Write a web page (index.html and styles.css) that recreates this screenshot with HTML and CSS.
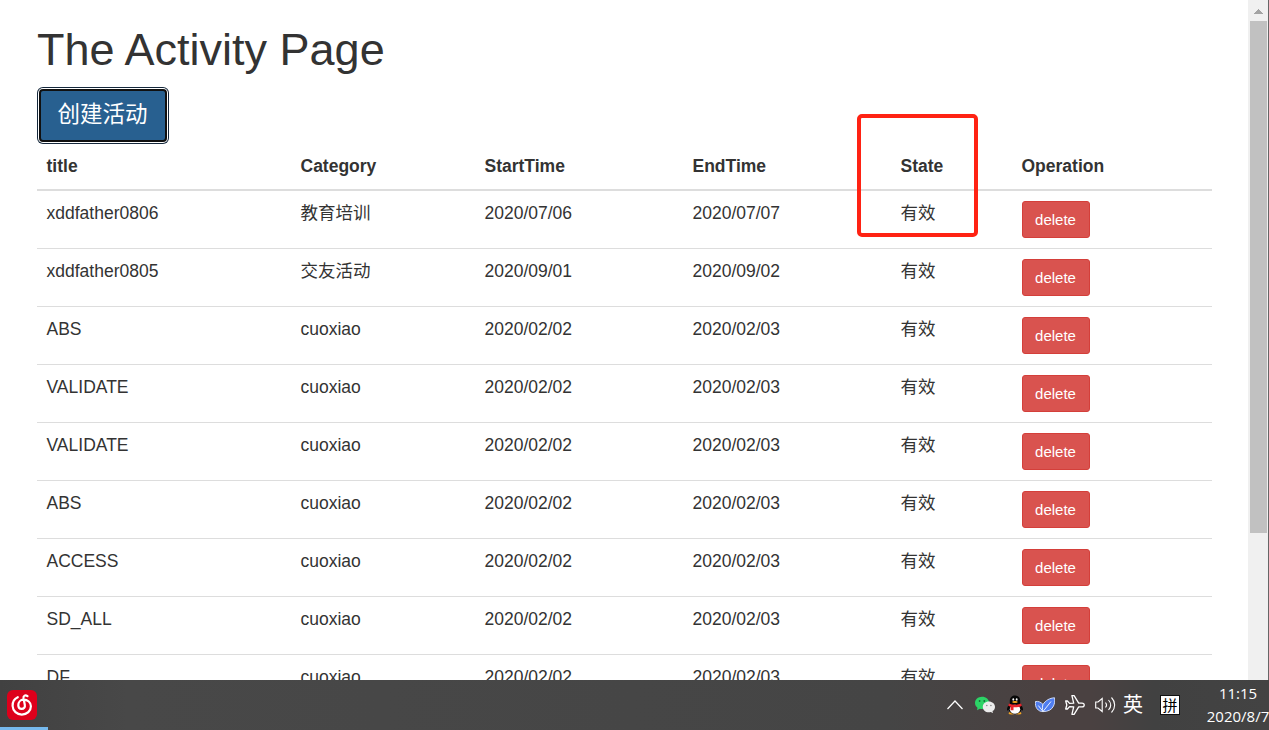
FILE: index.html
```html
<!DOCTYPE html>
<html lang="zh-CN">
<head>
    <meta charset="UTF-8">
    <meta name="viewport" content="width=device-width, initial-scale=1.0">
    <title>The Activity Page</title>
    <link rel="stylesheet" href="styles.css">
</head>
<body>
    <div class="window">
        <div class="container">
            <h1>The Activity Page</h1>
            <button class="btn btn-primary">创建活动</button>

            <table class="table">
                <colgroup>
                    <col class="col-title">
                    <col class="col-category">
                    <col class="col-time">
                    <col class="col-time">
                    <col class="col-state">
                    <col>
                </colgroup>
                <thead>
                    <tr>
                        <th>title</th>
                        <th>Category</th>
                        <th>StartTime</th>
                        <th>EndTime</th>
                        <th class="state-head">State<span class="highlight"></span></th>
                        <th>Operation</th>
                    </tr>
                </thead>
                <tbody>
                    <tr>
                        <td>xddfather0806</td>
                        <td>教育培训</td>
                        <td>2020/07/06</td>
                        <td>2020/07/07</td>
                        <td>有效</td>
                        <td><button class="btn btn-danger">delete</button></td>
                    </tr>
                    <tr>
                        <td>xddfather0805</td>
                        <td>交友活动</td>
                        <td>2020/09/01</td>
                        <td>2020/09/02</td>
                        <td>有效</td>
                        <td><button class="btn btn-danger">delete</button></td>
                    </tr>
                    <tr>
                        <td>ABS</td>
                        <td>cuoxiao</td>
                        <td>2020/02/02</td>
                        <td>2020/02/03</td>
                        <td>有效</td>
                        <td><button class="btn btn-danger">delete</button></td>
                    </tr>
                    <tr>
                        <td>VALIDATE</td>
                        <td>cuoxiao</td>
                        <td>2020/02/02</td>
                        <td>2020/02/03</td>
                        <td>有效</td>
                        <td><button class="btn btn-danger">delete</button></td>
                    </tr>
                    <tr>
                        <td>VALIDATE</td>
                        <td>cuoxiao</td>
                        <td>2020/02/02</td>
                        <td>2020/02/03</td>
                        <td>有效</td>
                        <td><button class="btn btn-danger">delete</button></td>
                    </tr>
                    <tr>
                        <td>ABS</td>
                        <td>cuoxiao</td>
                        <td>2020/02/02</td>
                        <td>2020/02/03</td>
                        <td>有效</td>
                        <td><button class="btn btn-danger">delete</button></td>
                    </tr>
                    <tr>
                        <td>ACCESS</td>
                        <td>cuoxiao</td>
                        <td>2020/02/02</td>
                        <td>2020/02/03</td>
                        <td>有效</td>
                        <td><button class="btn btn-danger">delete</button></td>
                    </tr>
                    <tr>
                        <td>SD_ALL</td>
                        <td>cuoxiao</td>
                        <td>2020/02/02</td>
                        <td>2020/02/03</td>
                        <td>有效</td>
                        <td><button class="btn btn-danger">delete</button></td>
                    </tr>
                    <tr>
                        <td>DF</td>
                        <td>cuoxiao</td>
                        <td>2020/02/02</td>
                        <td>2020/02/03</td>
                        <td>有效</td>
                        <td><button class="btn btn-danger">delete</button></td>
                    </tr>
                </tbody>
            </table>
        </div>

        <div class="scrollbar">
            <svg class="scroll-up" viewBox="0 0 9 5" shape-rendering="crispEdges"><path d="M0 5L4.5 0L9 5z" fill="#a3a3a3"/></svg>
            <div class="scroll-thumb"></div>
        </div>
    </div>

    <div class="taskbar">
        <div class="task-app">
            <svg viewBox="0 0 30 30">
                <rect width="30" height="30" rx="6" fill="#dd001b"/>
                <path d="M10.8 7.2C7.3 8.8 5.4 12.3 5.6 16C5.9 21 9.9 24.6 14.8 24.6C20 24.6 23.9 20.9 23.9 16.3C23.9 12.3 20.6 9.7 16.6 9.7C13.3 9.7 11.3 12.3 11.3 15.2C11.3 17.5 12.8 18.9 14.6 18.9C16.9 18.9 18.3 17.2 17.8 14.8L16.5 8.4C16.1 5.5 18.3 4.6 20.5 6.2" fill="none" stroke="#fff" stroke-width="2.2" stroke-linecap="round"/>
            </svg>
        </div>

        <div class="tray">
            <svg width="16" height="20" viewBox="0 0 16 20"><path d="M.5 14L8 6l7.5 8" fill="none" stroke="#fff" stroke-width="1.2"/></svg>

            <!-- wechat -->
            <svg width="20" height="20" viewBox="0 0 20 20">
                <path d="M7 1.8C3 1.8 0 4.6 0 8c0 2 1 3.7 2.5 4.8L2 15.2l2.8-1.5c.7.2 1.4.3 2.2.3c4 0 7.2-2.700 7.2-6.1S11 1.800 7 1.800z" fill="#2cd366"/>
                <path d="M13.8 6.6c-3.4 0-6 2.4-6 5.3s2.6 5.3 6 5.3c.7 0 1.3-.1 1.9-.3l2.3 1.2l-.5-2c1.5-.9 2.500-2.400 2.500-4.200c0-2.900-2.800-5.300-6.200-5.300z" fill="#ececec"/>
                <circle cx="4.6" cy="6" r=".9" fill="#176b38"/>
                <circle cx="9.3" cy="6" r=".9" fill="#176b38"/>
                <circle cx="11.8" cy="10.5" r=".8" fill="#888"/>
                <circle cx="15.9" cy="10.5" r=".8" fill="#888"/>
            </svg>

            <!-- qq -->
            <svg width="20" height="20" viewBox="0 0 20 20">
                <ellipse cx="6.5" cy="18.2" rx="3" ry="1.3" fill="#f5a623"/>
                <ellipse cx="13.5" cy="18.2" rx="3" ry="1.3" fill="#f5a623"/>
                <path d="M10 .5C6.5.5 4.8 3 4.8 6v2.5C3.3 10.300 2 12.500 2 14.500c0 1.200.6 1.600 1.700.2C4.500 17.400 6.800 19 10 19s5.500-1.600 6.300-4.300c1.100 1.400 1.700 1 1.700-.2c0-2-1.300-4.200-2.800-6V6c0-3-1.700-5.500-5.200-5.500z" fill="#080808"/>
                <ellipse cx="10" cy="14.2" rx="5.2" ry="4.5" fill="#fff"/>
                <ellipse cx="8.3" cy="4.4" rx=".9" ry="1.2" fill="#fff"/>
                <ellipse cx="11.7" cy="4.4" rx=".9" ry="1.2" fill="#fff"/>
                <ellipse cx="10" cy="7" rx="2.8" ry=".9" fill="#f7a81b"/>
                <path d="M3.9 8.6C8 10.2 12 10.2 16.1 8.6l.7 2.4c-2.8 1.3-5.6 1.6-8.3 1.2v3H5.600v-3.600L3.300 11z" fill="#e8262c"/>
            </svg>

            <!-- leaf -->
            <svg width="20" height="20" viewBox="0 0 20 20">
                <path d="M.5 6.5C3.5 6 6 7.2 8 9.5C10.5 5.5 14.5 3 19.6 2.8C20 6 19.6 8.7 18.5 11C16.8 14.8 13 16.6 8 16.6C3 16.6-.3 12.5.5 6.5z" fill="#4f7df0" stroke="#dce8ff" stroke-width=".9"/>
                <path d="M8 9.5C7.2 11.5 7.2 14 8 16.5L16 6.5M8 16.5L3.3 10.5" fill="none" stroke="#e8f0ff" stroke-width="1"/>
            </svg>

            <!-- airplane mode -->
            <svg width="20" height="20" viewBox="0 0 20 20">
                <path d="M.7 6h1.7l2.2 2.4l4.1-.3L6.900.7h2.200l4.600 7.400h3.200c3.100 0 3.100 3.800 0 3.800h-3.200L9.100 19.300H6.900l1.800-7.400l-4.100-.3L2.400 14H.7l1.100-4z" fill="none" stroke="#fff" stroke-width="1.3" stroke-linejoin="round"/>
            </svg>

            <!-- volume -->
            <svg width="22" height="20" viewBox="0 0 22 20">
                <path d="M.7 7h2.3l4.2-3.5v13L3 13H.7z" fill="none" stroke="#fff" stroke-width="1.1"/>
                <path d="M10.5 7.5c1.3 1.5 1.3 3.5 0 5M13.5 5c2.7 3 2.7 7 0 10M16.500 2.500c4.200 4.500 4.200 10.500 0 15" fill="none" stroke="#fff" stroke-width="1.1"/>
            </svg>

            <span class="ime-lang">英</span>
            <span class="ime-mode">拼</span>
            <div class="clock">
                <div>11:15</div>
                <div>2020/8/7</div>
            </div>
        </div>
    </div>
</body>
</html>
```
FILE: styles.css
```css
* {
    box-sizing: border-box;
}

body {
    margin: 0;
    height: 730px;
    display: flex;
    flex-direction: column;
    overflow: hidden;
    background: #fff;
    color: #333;
    font-family: "Liberation Sans", Arial, "Noto Sans CJK SC", sans-serif;
    font-size: 17.5px;
    line-height: 25px;
}

.window {
    height: 680px;
    display: flex;
    justify-content: space-between;
    overflow: hidden;
    border-right: 1px solid #666;
}

.container {
    width: 1175px;
    margin-left: 37px;
}

h1 {
    margin: 25px 0 14px;
    font-size: 45px;
    font-weight: 500;
    line-height: 50px;
}

.btn {
    display: block;
    font-family: inherit;
    color: #fff;
    cursor: pointer;
}

.btn-primary {
    width: 128px;
    height: 53px;
    margin: 0 0 2px 2px;
    padding: 0 1px 1px 0;
    font-size: 22.5px;
    line-height: 30px;
    background: #286090;
    border: 2px solid #101010;
    border-radius: 4px;
    box-shadow: 0 0 0 1px #fff, 0 0 0 2px #14273b;
}

.btn-danger {
    width: 68px;
    height: 37px;
    padding: 0 1px 0 0;
    font-size: 15px;
    line-height: 22px;
    background: #d9534f;
    border: 1px solid #d43f3a;
    border-radius: 3px;
}

.btn-danger:hover {
    background: #c9302c;
}

.table {
    width: 100%;
    table-layout: fixed;
    border-collapse: separate;
    border-spacing: 0;
}

.col-title {
    width: 254px;
}

.col-category {
    width: 184px;
}

.col-time {
    width: 208px;
}

.col-state {
    width: 121px;
}

.table th {
    height: 47px;
    padding: 0 9.5px;
    text-align: left;
    vertical-align: middle;
    border-bottom: 2px solid #ddd;
}

.table td {
    height: 58px;
    padding: 10px 9.5px 0;
    vertical-align: top;
    border-bottom: 1px solid #ddd;
}

.table th:last-child {
    padding-left: 9.5px;
}

.table td:last-child {
    padding-left: 10px;
}

.state-head {
    position: relative;
}

/* red marker around the State column */
.highlight {
    position: absolute;
    left: -34px;
    top: -30px;
    width: 121px;
    height: 123px;
    border: 4px solid #ff2213;
    border-radius: 5px;
}

.scrollbar {
    width: 20px;
    padding: 9px 1px 0 2px;
    background: #f0f0f0;
}

.scroll-up {
    display: block;
    width: 9px;
    height: 5px;
    margin: 0 0 7px 4px;
}

.scroll-thumb {
    height: 512px;
    background: #c1c1c1;
}

.taskbar {
    height: 50px;
    display: flex;
    justify-content: space-between;
    overflow: hidden;
    color: #fff;
    background: linear-gradient(90deg, #414141 0, #484848 10%, #454545 70%, #4a4141 82%, #4a4141 86%, #414141 91%, #434343 100%);
}

.task-app {
    width: 48px;
    padding: 10px 0 0 7px;
    border-bottom: 3px solid #76b9ed;
}

.task-app svg {
    display: block;
    width: 30px;
    height: 30px;
}

.tray {
    width: 322px;
    display: flex;
    align-items: center;
    flex-shrink: 0;
}

.tray svg {
    margin-right: 10px;
    flex-shrink: 0;
}

.tray svg:first-child {
    margin-right: 12px;
}

.ime-lang {
    width: 20px;
    margin: 0 17px 3px -4px;
    flex-shrink: 0;
    font-family: "Noto Sans CJK SC", sans-serif;
    font-size: 20px;
}

.ime-mode {
    width: 20px;
    height: 20px;
    flex-shrink: 0;
    border: 1px solid #111;
    background: #fff;
    color: #000;
    font-family: "Noto Sans CJK SC", sans-serif;
    font-size: 15px;
    line-height: 17px;
    text-align: center;
}

.clock {
    width: 66px;
    margin-left: 25px;
    flex-shrink: 0;
    font-family: "Open Sans", "Noto Sans", sans-serif;
    font-size: 15px;
    line-height: 23px;
    text-align: center;
    white-space: nowrap;
}
```
